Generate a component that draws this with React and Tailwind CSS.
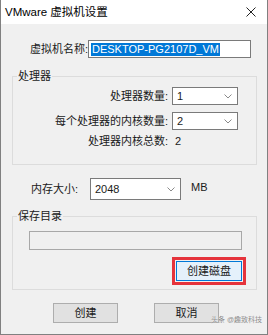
import React from "react";

const Chevron = () => (
  <svg width="8" height="5" viewBox="0 0 8 5" className="shrink-0">
    <path d="M0.5 0.5 L4 4 L7.5 0.5" fill="none" stroke="#8a8a8a" strokeWidth="1" />
  </svg>
);

const Combo = ({ value, className }) => (
  <div
    className={`flex items-center justify-between bg-white border border-[#7a7a7a] pl-[4px] pr-[5px] ${className}`}
  >
    <span>{value}</span>
    <Chevron />
  </div>
);

const App = () => {
  return (
    <div className="w-[268px] h-[335px] flex flex-col text-[11px] leading-[16px] text-[#1a1a1a] font-['Liberation_Sans','Noto_Sans_CJK_SC',sans-serif] relative">
      {/* title bar */}
      <div className="h-[24px] shrink-0 bg-white flex items-center justify-between pl-[4px] pr-[11px] border-x border-[#808080]">
        <span className="text-[11.5px] text-black">VMware 虚拟机设置</span>
        <svg width="10" height="10" viewBox="0 0 10 10">
          <path d="M0.5 0.5 L9.5 9.5 M9.5 0.5 L0.5 9.5" stroke="#222" strokeWidth="1" />
        </svg>
      </div>

      <div className="flex-1 bg-[#f0f0f0] border-x border-b border-[#808080] flex flex-col">
        {/* name */}
        <div className="flex items-center mt-[16px]">
          <span className="w-[87px] text-right">虚拟机名称:</span>
          <div className="w-[163px] h-[18px] bg-white border border-[#7a7a7a] flex items-center pl-[2px]">
            <span className="bg-[#0078d7] text-white leading-[13px] px-[1px]">DESKTOP-PG2107D_VM</span>
          </div>
        </div>

        {/* processor */}
        <fieldset className="mt-[10px] ml-[11px] w-[245px] border border-[#dcdcdc] pt-[3px] pb-[14px]">
          <legend className="ml-[4px] px-[1px] leading-[16px]">处理器</legend>
          <div className="flex flex-col">
            <div className="flex items-center h-[18px]">
              <span className="w-[155px] text-right">处理器数量:</span>
              <Combo value="1" className="ml-[4px] w-[66px] h-[18px]" />
            </div>
            <div className="flex items-center h-[18px] mt-[7px]">
              <span className="w-[155px] text-right">每个处理器的内核数量:</span>
              <Combo value="2" className="ml-[4px] w-[66px] h-[18px]" />
            </div>
            <div className="flex items-center h-[18px] mt-[2px]">
              <span className="w-[155px] text-right">处理器内核总数:</span>
              <span className="ml-[7px]">2</span>
            </div>
          </div>
        </fieldset>

        {/* memory */}
        <div className="flex items-start mt-[13px]">
          <span className="w-[77px] text-right leading-[22px]">内存大小:</span>
          <Combo value="2048" className="ml-[12px] w-[91px] h-[22px]" />
          <span className="ml-[10px] mt-[1px]">MB</span>
        </div>

        {/* save dir */}
        <fieldset className="mt-[8px] ml-[11px] w-[245px] border border-[#dcdcdc] pt-[7px] pb-[4px]">
          <legend className="ml-[4px] px-[1px] leading-[16px]">保存目录</legend>
          <div className="ml-[16px] w-[213px] h-[19px] bg-[#f0f0f0] border border-[#a8a8a8]" />
          <div className="flex justify-end mr-[10px] mt-[7px]">
            <div className="border-[3px] border-[#e5333b] p-[1px]">
              <button className="w-[66px] h-[20px] bg-[#e5f1fb] border border-[#0078d7] flex items-center justify-center">
                创建磁盘
              </button>
            </div>
          </div>
        </fieldset>

        {/* buttons */}
        <div className="flex mt-[13px] ml-[52px] gap-[36px]">
          <button className="w-[65px] h-[20px] bg-[#e1e1e1] border border-[#adadad] flex items-center justify-center">
            创建
          </button>
          <button className="w-[65px] h-[20px] bg-[#e1e1e1] border border-[#adadad] flex items-center justify-center">
            取消
          </button>
        </div>
      </div>

      {/* watermark */}
      <span className="absolute left-[211px] top-[315px] whitespace-nowrap text-[7px] leading-[9px] text-[#8a8a8a] [text-shadow:0_0_1px_#fff]">
        头条 @趣致科技
      </span>
    </div>
  );
};

export default App;
